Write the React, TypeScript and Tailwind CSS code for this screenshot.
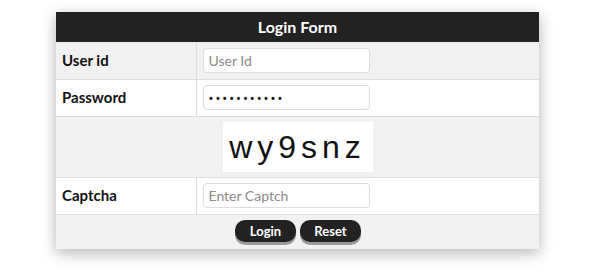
import React from 'react';

const labelCls = "w-[140px] border-r border-[#dddddd] px-[6px] text-left text-[15px] font-bold text-[#111111]";
const inputCls = "h-[25px] w-[167px] rounded-[4px] border border-[#dddddd] bg-white px-[5px] text-[14px] text-[#333333] placeholder:text-[#8a8a8a] outline-none";

export default function App() {
  return (
    <div className="min-h-[273px] w-[600px] bg-white pt-[12px] font-['Lato',sans-serif]">
      <div className="ml-[56px] w-[483px] shadow-[0_4px_14px_rgba(0,0,0,0.3)]">
        <table className="w-full border-collapse">
          <thead>
            <tr>
              <th colSpan={2} className="h-[30px] bg-[#222222] text-center text-[16px] font-bold text-white">
                Login Form
              </th>
            </tr>
          </thead>
          <tbody>
            <tr className="h-[37px] border-b border-[#dddddd] bg-[#f1f1f1]">
              <td className={labelCls}>User id</td>
              <td className="px-[6px]">
                <input type="text" placeholder="User Id" className={inputCls} />
              </td>
            </tr>
            <tr className="h-[37px] border-b border-[#dddddd] bg-white">
              <td className={labelCls}>Password</td>
              <td className="px-[6px]">
                <input
                  type="password"
                  defaultValue="12345678901"
                  className="h-[25px] w-[167px] rounded-[4px] border border-[#dddddd] bg-white px-[5px] font-['Noto_Sans',sans-serif] text-[13px] tracking-[2px] text-[#111111] outline-none"
                />
              </td>
            </tr>
            <tr className="h-[61px] border-b border-[#dddddd] bg-[#f1f1f1]">
              <td colSpan={2} className="text-center">
                <div className="mx-auto flex h-[50px] w-[150px] items-center justify-center bg-white font-['Liberation_Sans',Arial,sans-serif] text-[32px] leading-none tracking-[5px] text-[#111111]">
                  wy9snz
                </div>
              </td>
            </tr>
            <tr className="h-[37px] border-b border-[#dddddd] bg-white">
              <td className={labelCls}>Captcha</td>
              <td className="px-[6px]">
                <input type="text" placeholder="Enter Captch" className={inputCls} />
              </td>
            </tr>
            <tr className="h-[35px] bg-[#f1f1f1]">
              <td colSpan={2} className="pb-[1px] text-center">
                <div className="flex justify-center gap-[4px] pl-[1px]">
                  <button className="h-[22px] w-[61px] rounded-[10px] bg-[#222222] text-[13px] font-bold text-white shadow-[0_3px_0_#9a9a9a]">
                    Login
                  </button>
                  <button className="h-[22px] w-[61px] rounded-[10px] bg-[#222222] text-[13px] font-bold text-white shadow-[0_3px_0_#9a9a9a]">
                    Reset
                  </button>
                </div>
              </td>
            </tr>
          </tbody>
        </table>
      </div>
    </div>
  );
}
